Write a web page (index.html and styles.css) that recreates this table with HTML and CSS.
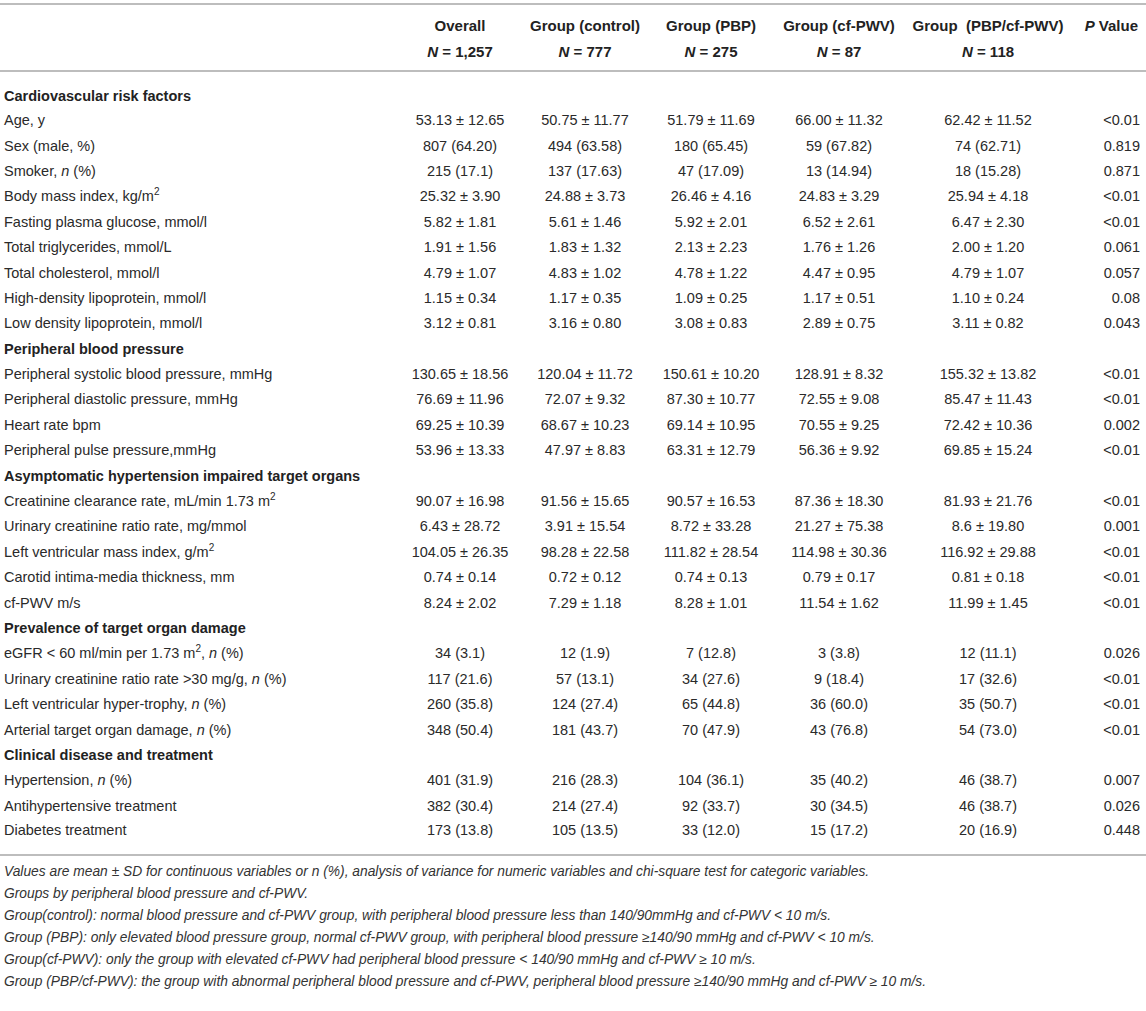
FILE: index.html
```html
<!DOCTYPE html>
<html lang="en">
<head>
  <meta charset="UTF-8" />
  <title>Baseline characteristics by group</title>
  <link rel="stylesheet" href="styles.css">
</head>
<body>

  <table class="data-table">
    <colgroup>
      <col class="c-label">
      <col class="c-overall">
      <col class="c-control">
      <col class="c-pbp">
      <col class="c-pwv">
      <col class="c-both">
      <col class="c-p">
    </colgroup>
    <thead>
      <tr class="head-top">
        <th></th>
        <th>Overall</th>
        <th>Group (control)</th>
        <th>Group (PBP)</th>
        <th>Group (cf-PWV)</th>
        <th>Group&nbsp; (PBP/cf-PWV)</th>
        <th class="pval"><i>P</i> Value</th>
      </tr>
      <tr class="head-n">
        <th></th>
        <th><i>N</i> = 1,257</th>
        <th><i>N</i> = 777</th>
        <th><i>N</i> = 275</th>
        <th><i>N</i> = 87</th>
        <th><i>N</i> = 118</th>
        <th></th>
      </tr>
    </thead>
    <tbody>
      <tr class="section"><td colspan="7">Cardiovascular risk factors</td></tr>
      <tr><td>Age, y</td><td>53.13 ± 12.65</td><td>50.75 ± 11.77</td><td>51.79 ± 11.69</td><td>66.00 ± 11.32</td><td>62.42 ± 11.52</td><td>&lt;0.01</td></tr>
      <tr><td>Sex (male, %)</td><td>807 (64.20)</td><td>494 (63.58)</td><td>180 (65.45)</td><td>59 (67.82)</td><td>74 (62.71)</td><td>0.819</td></tr>
      <tr><td>Smoker, <i>n</i> (%)</td><td>215 (17.1)</td><td>137 (17.63)</td><td>47 (17.09)</td><td>13 (14.94)</td><td>18 (15.28)</td><td>0.871</td></tr>
      <tr><td>Body mass index, kg/m<sup>2</sup></td><td>25.32 ± 3.90</td><td>24.88 ± 3.73</td><td>26.46 ± 4.16</td><td>24.83 ± 3.29</td><td>25.94 ± 4.18</td><td>&lt;0.01</td></tr>
      <tr><td>Fasting plasma glucose, mmol/l</td><td>5.82 ± 1.81</td><td>5.61 ± 1.46</td><td>5.92 ± 2.01</td><td>6.52 ± 2.61</td><td>6.47 ± 2.30</td><td>&lt;0.01</td></tr>
      <tr><td>Total triglycerides, mmol/L</td><td>1.91 ± 1.56</td><td>1.83 ± 1.32</td><td>2.13 ± 2.23</td><td>1.76 ± 1.26</td><td>2.00 ± 1.20</td><td>0.061</td></tr>
      <tr><td>Total cholesterol, mmol/l</td><td>4.79 ± 1.07</td><td>4.83 ± 1.02</td><td>4.78 ± 1.22</td><td>4.47 ± 0.95</td><td>4.79 ± 1.07</td><td>0.057</td></tr>
      <tr><td>High-density lipoprotein, mmol/l</td><td>1.15 ± 0.34</td><td>1.17 ± 0.35</td><td>1.09 ± 0.25</td><td>1.17 ± 0.51</td><td>1.10 ± 0.24</td><td>0.08</td></tr>
      <tr><td>Low density lipoprotein, mmol/l</td><td>3.12 ± 0.81</td><td>3.16 ± 0.80</td><td>3.08 ± 0.83</td><td>2.89 ± 0.75</td><td>3.11 ± 0.82</td><td>0.043</td></tr>

      <tr class="section"><td colspan="7">Peripheral blood pressure</td></tr>
      <tr><td>Peripheral systolic blood pressure, mmHg</td><td>130.65 ± 18.56</td><td>120.04 ± 11.72</td><td>150.61 ± 10.20</td><td>128.91 ± 8.32</td><td>155.32 ± 13.82</td><td>&lt;0.01</td></tr>
      <tr><td>Peripheral diastolic pressure, mmHg</td><td>76.69 ± 11.96</td><td>72.07 ± 9.32</td><td>87.30 ± 10.77</td><td>72.55 ± 9.08</td><td>85.47 ± 11.43</td><td>&lt;0.01</td></tr>
      <tr><td>Heart rate bpm</td><td>69.25 ± 10.39</td><td>68.67 ± 10.23</td><td>69.14 ± 10.95</td><td>70.55 ± 9.25</td><td>72.42 ± 10.36</td><td>0.002</td></tr>
      <tr><td>Peripheral pulse pressure,mmHg</td><td>53.96 ± 13.33</td><td>47.97 ± 8.83</td><td>63.31 ± 12.79</td><td>56.36 ± 9.92</td><td>69.85 ± 15.24</td><td>&lt;0.01</td></tr>

      <tr class="section"><td colspan="7">Asymptomatic hypertension impaired target organs</td></tr>
      <tr><td>Creatinine clearance rate, mL/min 1.73 m<sup>2</sup></td><td>90.07 ± 16.98</td><td>91.56 ± 15.65</td><td>90.57 ± 16.53</td><td>87.36 ± 18.30</td><td>81.93 ± 21.76</td><td>&lt;0.01</td></tr>
      <tr><td>Urinary creatinine ratio rate, mg/mmol</td><td>6.43 ± 28.72</td><td>3.91 ± 15.54</td><td>8.72 ± 33.28</td><td>21.27 ± 75.38</td><td>8.6 ± 19.80</td><td>0.001</td></tr>
      <tr><td>Left ventricular mass index, g/m<sup>2</sup></td><td>104.05 ± 26.35</td><td>98.28 ± 22.58</td><td>111.82 ± 28.54</td><td>114.98 ± 30.36</td><td>116.92 ± 29.88</td><td>&lt;0.01</td></tr>
      <tr><td>Carotid intima-media thickness, mm</td><td>0.74 ± 0.14</td><td>0.72 ± 0.12</td><td>0.74 ± 0.13</td><td>0.79 ± 0.17</td><td>0.81 ± 0.18</td><td>&lt;0.01</td></tr>
      <tr><td>cf-PWV m/s</td><td>8.24 ± 2.02</td><td>7.29 ± 1.18</td><td>8.28 ± 1.01</td><td>11.54 ± 1.62</td><td>11.99 ± 1.45</td><td>&lt;0.01</td></tr>

      <tr class="section"><td colspan="7">Prevalence of target organ damage</td></tr>
      <tr><td>eGFR &lt; 60 ml/min per 1.73 m<sup>2</sup>, <i>n</i> (%)</td><td>34 (3.1)</td><td>12 (1.9)</td><td>7 (12.8)</td><td>3 (3.8)</td><td>12 (11.1)</td><td>0.026</td></tr>
      <tr><td>Urinary creatinine ratio rate &gt;30 mg/g, <i>n</i> (%)</td><td>117 (21.6)</td><td>57 (13.1)</td><td>34 (27.6)</td><td>9 (18.4)</td><td>17 (32.6)</td><td>&lt;0.01</td></tr>
      <tr><td>Left ventricular hyper-trophy, <i>n</i> (%)</td><td>260 (35.8)</td><td>124 (27.4)</td><td>65 (44.8)</td><td>36 (60.0)</td><td>35 (50.7)</td><td>&lt;0.01</td></tr>
      <tr><td>Arterial target organ damage, <i>n</i> (%)</td><td>348 (50.4)</td><td>181 (43.7)</td><td>70 (47.9)</td><td>43 (76.8)</td><td>54 (73.0)</td><td>&lt;0.01</td></tr>

      <tr class="section"><td colspan="7">Clinical disease and treatment</td></tr>
      <tr><td>Hypertension, <i>n</i> (%)</td><td>401 (31.9)</td><td>216 (28.3)</td><td>104 (36.1)</td><td>35 (40.2)</td><td>46 (38.7)</td><td>0.007</td></tr>
      <tr><td>Antihypertensive treatment</td><td>382 (30.4)</td><td>214 (27.4)</td><td>92 (33.7)</td><td>30 (34.5)</td><td>46 (38.7)</td><td>0.026</td></tr>
      <tr><td>Diabetes treatment</td><td>173 (13.8)</td><td>105 (13.5)</td><td>33 (12.0)</td><td>15 (17.2)</td><td>20 (16.9)</td><td>0.448</td></tr>
    </tbody>
  </table>

  <!-- Footnotes -->
  <div class="notes">
    <p>Values are mean ± SD for continuous variables or n (%), analysis of variance for numeric variables and chi-square test for categoric variables.</p>
    <p>Groups by peripheral blood pressure and cf-PWV.</p>
    <p>Group(control): normal blood pressure and cf-PWV group, with peripheral blood pressure less than 140/90mmHg and cf-PWV &lt; 10 m/s.</p>
    <p>Group (PBP): only elevated blood pressure group, normal cf-PWV group, with peripheral blood pressure ≥140/90 mmHg and cf-PWV &lt; 10 m/s.</p>
    <p>Group(cf-PWV): only the group with elevated cf-PWV had peripheral blood pressure &lt; 140/90 mmHg and cf-PWV ≥ 10 m/s.</p>
    <p>Group (PBP/cf-PWV): the group with abnormal peripheral blood pressure and cf-PWV, peripheral blood pressure ≥140/90 mmHg and cf-PWV ≥ 10 m/s.</p>
  </div>

</body>
</html>
```

FILE: styles.css
```css
body {
  margin: 0;
  background: #fff;
  color: #2a2a2a;
  font-family: "Liberation Sans", Arial, sans-serif;
  font-size: 14.5px;
}

.data-table {
  width: 1146px;
  margin-top: 3px;
  border-collapse: collapse;
  table-layout: fixed;
  border-top: 2px solid #bdbdbd;
  border-bottom: 2px solid #bdbdbd;
}

.c-label { width: 398px; }
.c-overall { width: 124px; }
.c-control { width: 126px; }
.c-pbp { width: 126px; }
.c-pwv { width: 130px; }
.c-both { width: 168px; }
.c-p { width: 74px; }

/* Header */
thead th {
  font-weight: bold;
  font-size: 15px;
  text-align: center;
  white-space: nowrap;
  padding: 0;
  color: #222;
}

.head-top { height: 35px; }
.head-top th { padding-top: 7px; }
.head-n { height: 32px; }
.head-n th { padding-bottom: 7px; }
thead tr:last-child { border-bottom: 2px solid #bdbdbd; }

thead .pval {
  text-align: right;
  padding-right: 8px;
}

/* Body */
tbody tr { height: 25.4px; }

tbody td {
  padding: 0;
  text-align: center;
  white-space: nowrap;
  line-height: 17px;
}

tbody td:first-child {
  text-align: left;
  padding-left: 4px;
}

tbody td:last-child {
  text-align: right;
  padding-right: 6px;
}

tbody tr:first-child { height: 37px; }
tbody tr:first-child td { padding-top: 12px; }
tbody tr:last-child { height: 36px; }
tbody tr:last-child td { padding-bottom: 11px; }

.section td,
.section td:last-child {
  font-weight: bold;
  color: #222;
  text-align: left;
  padding-left: 4px;
  padding-right: 0;
}

sup {
  font-size: 10px;
  line-height: 0;
}

/* Footnotes */
.notes {
  padding: 5px 4px 0;
  font-style: italic;
  font-size: 13.8px;
  color: #333;
}

.notes p {
  margin: 0;
  line-height: 22px;
  white-space: nowrap;
}
```
